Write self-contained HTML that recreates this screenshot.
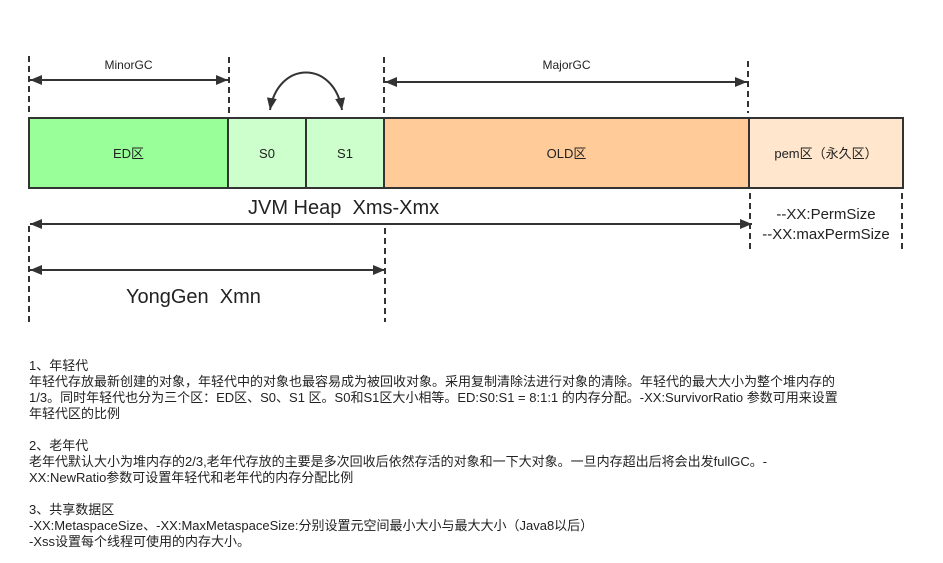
<!DOCTYPE html>
<html><head><meta charset="utf-8"><style>
body{margin:0;width:943px;height:563px;background:#fff;position:relative;overflow:hidden;font-family:"Liberation Sans","Noto Sans CJK SC",sans-serif;color:#222}
.t{position:absolute;white-space:nowrap;font-size:13px;line-height:16px}
.c{position:absolute;text-align:center;font-size:13px;line-height:16px;white-space:nowrap}
</style></head><body>
<svg width="943" height="563" style="position:absolute;left:0;top:0">
<defs>
<marker id="a" viewBox="0 0 12 10" refX="12" refY="5" markerWidth="12" markerHeight="10" markerUnits="userSpaceOnUse" orient="auto-start-reverse"><path d="M0,0L12,5L0,10z" fill="#333"/></marker>
</defs>
<rect x="29" y="118" width="199" height="70" fill="#99ff99"/>
<rect x="228" y="118" width="156" height="70" fill="#ccffcc"/>
<rect x="384" y="118" width="365" height="70" fill="#ffcc99"/>
<rect x="749" y="118" width="154" height="70" fill="#ffe6cc"/>
<g stroke="#333" stroke-width="2" fill="none">
<rect x="29" y="118" width="874" height="70"/>
<line x1="228" y1="118" x2="228" y2="188"/>
<line x1="306" y1="118" x2="306" y2="188"/>
<line x1="384" y1="118" x2="384" y2="188"/>
<line x1="749" y1="118" x2="749" y2="188"/>
</g>
<g stroke="#333" stroke-width="2" stroke-dasharray="6,4" fill="none">
<line x1="29" y1="56" x2="29" y2="113"/>
<line x1="229" y1="57" x2="229" y2="115"/>
<line x1="384" y1="57" x2="384" y2="115"/>
<line x1="748" y1="61" x2="748" y2="113"/>
<line x1="29" y1="226" x2="29" y2="322"/>
<line x1="385" y1="228" x2="385" y2="322"/>
<line x1="750" y1="193" x2="750" y2="250"/>
<line x1="902" y1="193" x2="902" y2="250"/>
</g>
<g stroke="#333" stroke-width="2" fill="none">
<line x1="30" y1="80" x2="228" y2="80" marker-start="url(#a)" marker-end="url(#a)"/>
<line x1="385" y1="82" x2="747" y2="82" marker-start="url(#a)" marker-end="url(#a)"/>
<line x1="30" y1="224" x2="752" y2="224" marker-start="url(#a)" marker-end="url(#a)"/>
<line x1="30" y1="270" x2="385" y2="270" marker-start="url(#a)" marker-end="url(#a)"/>
<path d="M270,110 C278,60 334,60 342,110" marker-start="url(#a)" marker-end="url(#a)"/>
</g>
</svg>
<div class="c" style="left:29px;top:57px;width:199px;font-size:12px">MinorGC</div>
<div class="c" style="left:384px;top:57px;width:365px;font-size:12px">MajorGC</div>
<div class="c" style="left:29px;top:146px;width:199px">ED区</div>
<div class="c" style="left:228px;top:146px;width:78px">S0</div>
<div class="c" style="left:306px;top:146px;width:78px">S1</div>
<div class="c" style="left:384px;top:146px;width:365px">OLD区</div>
<div class="c" style="left:749px;top:146px;width:154px">pem区（永久区）</div>
<div class="t" style="left:248px;top:195px;font-size:20px;line-height:26px">JVM Heap&nbsp; Xms-Xmx</div>
<div class="t" style="left:126px;top:284px;font-size:20px;line-height:26px">YongGen&nbsp; Xmn</div>
<div class="c" style="left:752px;top:205px;width:148px;font-size:15px;line-height:20px">--XX:PermSize<br>--XX:maxPermSize</div>
<div class="t" style="left:29px;top:358px">1、年轻代</div>
<div class="t" style="left:29px;top:374px">年轻代存放最新创建的对象，年轻代中的对象也最容易成为被回收对象。采用复制清除法进行对象的清除。年轻代的最大大小为整个堆内存的</div>
<div class="t" style="left:29px;top:390px">1/3。同时年轻代也分为三个区：ED区、S0、S1 区。S0和S1区大小相等。ED:S0:S1 = 8:1:1 的内存分配。-XX:SurvivorRatio 参数可用来设置</div>
<div class="t" style="left:29px;top:406px">年轻代区的比例</div>
<div class="t" style="left:29px;top:438px">2、老年代</div>
<div class="t" style="left:29px;top:454px">老年代默认大小为堆内存的2/3,老年代存放的主要是多次回收后依然存活的对象和一下大对象。一旦内存超出后将会出发fullGC。-</div>
<div class="t" style="left:29px;top:470px">XX:NewRatio参数可设置年轻代和老年代的内存分配比例</div>
<div class="t" style="left:29px;top:502px">3、共享数据区</div>
<div class="t" style="left:29px;top:518px">-XX:MetaspaceSize、-XX:MaxMetaspaceSize:分别设置元空间最小大小与最大大小（Java8以后）</div>
<div class="t" style="left:29px;top:534px">-Xss设置每个线程可使用的内存大小。</div>
</body></html>
